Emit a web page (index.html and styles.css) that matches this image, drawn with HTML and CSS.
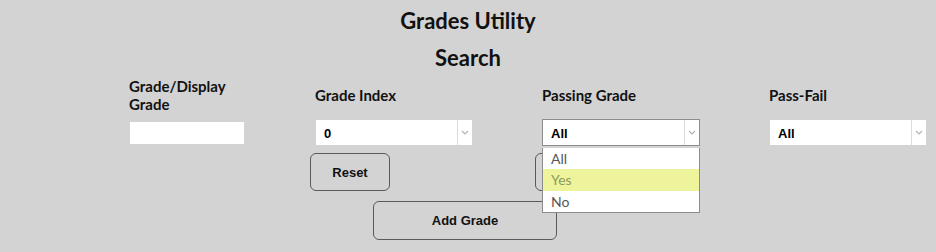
FILE: index.html
```html
<!DOCTYPE html>
<html>
<head>
<meta charset="utf-8">
<link rel="stylesheet" href="styles.css">
</head>
<body>
<div class="page">
  <h1 class="title">Grades Utility</h1>
  <h2 class="subtitle">Search</h2>
  <div class="filters">
    <label class="flabel">Grade/Display<br>Grade</label>
    <label class="flabel">Grade Index</label>
    <label class="flabel">Passing Grade</label>
    <label class="flabel">Pass-Fail</label>

    <div class="ctrl"><div class="textbox"></div></div>
    <div class="ctrl">
      <div class="select">
        <span class="sel-value">0</span>
        <span class="sel-arrow"><svg width="8" height="5" viewBox="0 0 8 5"><path d="M1 1 L4 4 L7 1" fill="none" stroke="#b4b4b4" stroke-width="1.2"/></svg></span>
      </div>
    </div>
    <div class="ctrl ctrl-open">
      <div class="select select-open">
        <span class="sel-value">All</span>
        <span class="sel-arrow"><svg width="8" height="5" viewBox="0 0 8 5"><path d="M1 1 L4 4 L7 1" fill="none" stroke="#b4b4b4" stroke-width="1.2"/></svg></span>
      </div>
      <ul class="dropdown">
        <li class="opt">All</li>
        <li class="opt opt-hover">Yes</li>
        <li class="opt">No</li>
      </ul>
    </div>
    <div class="ctrl">
      <div class="select">
        <span class="sel-value">All</span>
        <span class="sel-arrow"><svg width="8" height="5" viewBox="0 0 8 5"><path d="M1 1 L4 4 L7 1" fill="none" stroke="#b4b4b4" stroke-width="1.2"/></svg></span>
      </div>
    </div>
  </div>
  <div class="actions">
    <button class="btn">Reset</button>
    <button class="btn btn-covered" aria-label="Search"></button>
  </div>
  <div class="add-row">
    <button class="btn btn-add">Add Grade</button>
  </div>
</div>
</body>
</html>
```

FILE: styles.css
```css
html, body {
  margin: 0;
  padding: 0;
  background: #d3d3d3;
}
body {
  font-family: Lato, "Noto Sans", sans-serif;
  color: #111;
  width: 936px;
  height: 252px;
  overflow: hidden;
}
.title {
  margin: 0;
  padding-top: 9px;
  font-size: 22px;
  line-height: 24px;
  font-weight: 700;
  text-align: center;
}
.subtitle {
  margin: 13px 0 0 0;
  font-size: 22px;
  line-height: 24px;
  font-weight: 700;
  text-align: center;
}
.filters {
  display: grid;
  grid-template-columns: 186px 227px 227px 1fr;
  grid-template-rows: 36px 31px;
  row-gap: 4px;
  padding-left: 129px;
  margin-top: 7px;
  align-items: center;
}
.flabel {
  font-size: 15px;
  line-height: 18px;
  font-weight: 700;
}
.ctrl {
  padding-left: 1px;
  display: flex;
  align-items: center;
}
.ctrl-open {
  position: relative;
  padding-left: 0;
}
.textbox {
  width: 114px;
  height: 22px;
  background: #fff;
}
.select {
  width: 156px;
  height: 25px;
  background: #fff;
  display: flex;
  align-items: stretch;
  box-sizing: border-box;
}
.select-open {
  width: 158px;
  height: 27px;
  border: 1px solid #8c8c8c;
}
.sel-value {
  flex: 1;
  padding-left: 8px;
  display: flex;
  align-items: center;
  font-family: "Liberation Sans", Arial, sans-serif;
  font-weight: 700;
  font-size: 13px;
  color: #000;
  padding-top: 2px;
}
.sel-arrow {
  width: 14px;
  border-left: 1px solid #dcdcdc;
  display: flex;
  align-items: center;
  justify-content: center;
}
.dropdown {
  position: absolute;
  left: 0;
  top: 29px;
  width: 158px;
  box-sizing: border-box;
  margin: 0;
  padding: 0;
  list-style: none;
  background: #fff;
  border: 1px solid #8c8c8c;
  border-top: none;
  z-index: 2;
}
.opt {
  height: 21px;
  line-height: 21px;
  padding-left: 8px;
  font-size: 14px;
  color: #555;
}
.opt-hover {
  background: #eef49c;
  color: #8f9860;
  height: 22px;
  line-height: 22px;
}
.actions {
  display: flex;
  gap: 145px;
  padding-left: 310px;
  margin-top: 5px;
}
.btn {
  width: 80px;
  height: 38px;
  background: transparent;
  border: 1px solid #5a5a5a;
  border-radius: 6px;
  font-family: "Liberation Sans", Arial, sans-serif;
  font-weight: 700;
  font-size: 13px;
  color: #111;
  padding: 0;
}
.add-row {
  padding-left: 373px;
  margin-top: 10px;
}
.btn-add {
  width: 184px;
  height: 39px;
}
```
